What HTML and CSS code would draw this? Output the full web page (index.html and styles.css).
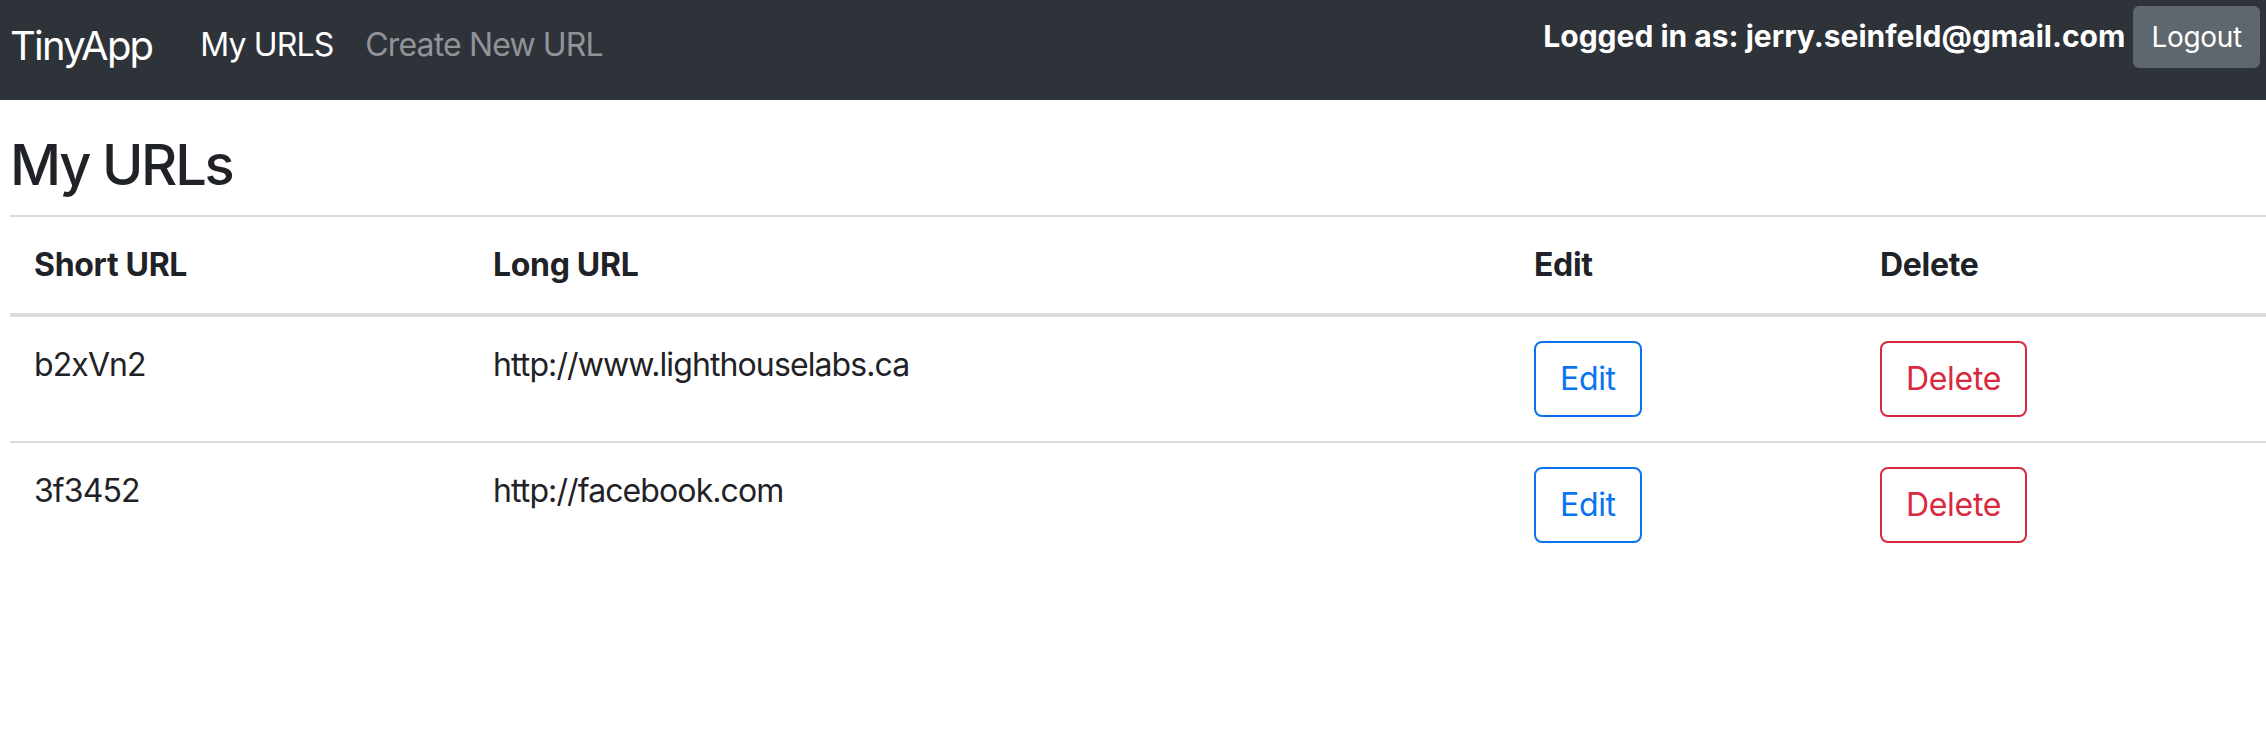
FILE: index.html
```html
<!DOCTYPE html>
<html lang="en">
<head>
<meta charset="utf-8">
<title>TinyApp</title>
<link rel="stylesheet" href="styles.css">
</head>
<body>
<nav class="navbar">
  <div class="nav-left">
    <a class="brand" href="#">TinyApp</a>
    <a class="nav-link active" href="#">My URLS</a>
    <a class="nav-link muted" href="#">Create New URL</a>
  </div>
  <div class="nav-right">
    <span class="user">Logged in as: jerry.seinfeld@gmail.com</span>
    <button class="btn-logout" type="button">Logout</button>
  </div>
</nav>
<main class="page">
  <h3 class="title">My URLs</h3>
  <table class="urls">
    <thead>
      <tr>
        <th class="col-short">Short URL</th>
        <th class="col-long">Long URL</th>
        <th class="col-edit">Edit</th>
        <th class="col-delete">Delete</th>
      </tr>
    </thead>
    <tbody>
      <tr>
        <td>b2xVn2</td>
        <td>http://www.lighthouselabs.ca</td>
        <td><button class="btn btn-edit" type="button">Edit</button></td>
        <td><button class="btn btn-delete" type="button">Delete</button></td>
      </tr>
      <tr>
        <td>3f3452</td>
        <td>http://facebook.com</td>
        <td><button class="btn btn-edit" type="button">Edit</button></td>
        <td><button class="btn btn-delete" type="button">Delete</button></td>
      </tr>
    </tbody>
  </table>
</main>
</body>
</html>
```
FILE: styles.css
```css
* { box-sizing: border-box; }

body {
  margin: 0;
  font-family: "Inter", "Noto Sans", "Liberation Sans", sans-serif;
  color: #1f2226;
  background: #ffffff;
}

a { text-decoration: none; }

.navbar {
  height: 100px;
  background: #2e3239;
  display: flex;
  justify-content: space-between;
  align-items: flex-start;
  padding: 0 6px 0 10px;
}

.nav-left {
  display: flex;
  align-items: flex-start;
}

.brand {
  font-size: 40px;
  line-height: 60px;
  margin-top: 16px;
  margin-right: 32px;
  color: #ffffff;
  letter-spacing: -0.045em;
}

.nav-link {
  font-size: 32px;
  line-height: 48px;
  margin-top: 21px;
  padding: 0 16px;
  letter-spacing: -0.027em;
}

.nav-link.active { color: #ffffff; }
.nav-link.muted { color: #909397; }

.nav-right {
  display: flex;
  align-items: flex-start;
  gap: 8px;
  padding-top: 6px;
}

.user {
  font-size: 30px;
  font-weight: 700;
  line-height: 42px;
  margin-top: 9px;
  color: #ffffff;
}

.btn-logout {
  font-family: inherit;
  font-size: 28px;
  line-height: 42px;
  padding: 8px 16px;
  border: 2px solid #5f676e;
  border-radius: 6px;
  background: #5f676e;
  color: #ffffff;
  letter-spacing: -0.01em;
}

.page {
  padding: 0 0 0 10px;
}

.title {
  margin: 32px 0 16px 0;
  font-size: 56px;
  line-height: 67px;
  font-weight: 500;
  letter-spacing: -0.04em;
}

.urls {
  width: 2256px;
  border-collapse: collapse;
  table-layout: fixed;
  font-size: 32px;
  line-height: 48px;
}

.urls th,
.urls td {
  padding: 24px;
  text-align: left;
  border-top: 2px solid #d9dcdf;
}

.urls th {
  font-weight: 700;
  vertical-align: bottom;
  border-bottom: 4px solid #d9dcdf;
  letter-spacing: -0.01em;
}

.urls td {
  vertical-align: top;
  letter-spacing: -0.028em;
}

.col-short { width: 459px; }
.col-long { width: 1041px; }
.col-edit { width: 346px; }
.col-delete { width: auto; }

.btn {
  font-family: inherit;
  font-size: 32px;
  line-height: 48px;
  padding: 12px 24px;
  border-radius: 8px;
  background: #ffffff;
  letter-spacing: -0.01em;
}

.btn-edit {
  border: 2px solid #0a74f0;
  color: #0a74f0;
}

.btn-delete {
  border: 2px solid #d72a40;
  color: #d72a40;
}
```
